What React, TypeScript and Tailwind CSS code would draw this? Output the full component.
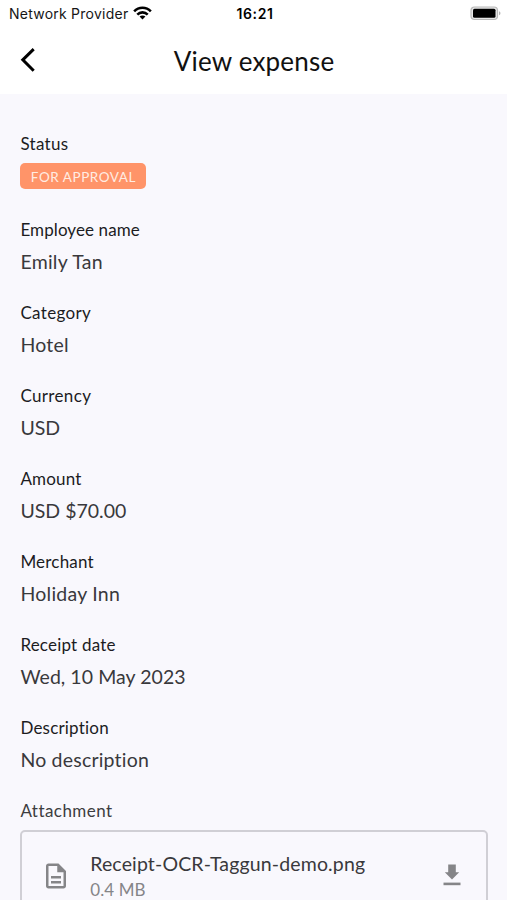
import React from 'react';
import { MdOutlineDescription } from 'react-icons/md';

interface Field {
  label: string;
  value: string;
  labelClass?: string;
  valueClass?: string;
}

const FIELDS: Field[] = [
  { label: 'Employee name', value: 'Emily Tan',        labelClass: 'tracking-[0.1px]' },
  { label: 'Category',      value: 'Hotel',            labelClass: 'tracking-[0.35px]' },
  { label: 'Currency',      value: 'USD',              labelClass: 'tracking-[0.35px]', valueClass: 'tracking-[0px]' },
  { label: 'Amount',        value: 'USD $70.00',       valueClass: 'tracking-[0px]' },
  { label: 'Merchant',      value: 'Holiday Inn' },
  { label: 'Receipt date',  value: 'Wed, 10 May 2023', valueClass: 'tracking-[0.05px]' },
  { label: 'Description',   value: 'No description',   valueClass: 'tracking-[0.2px]' },
];

function StatusBar() {
  return (
    <div className="grid h-7 grid-cols-3 items-center pl-[9px] pr-[6px] font-['Inter',sans-serif] text-[14px] leading-7 text-[#161616]">
      <div className="flex items-center gap-[5px] whitespace-nowrap">
        <span className="tracking-[0.24px]">Network Provider</span>
        <svg width="19" height="14" viewBox="0 0 20 14" className="-mt-[2px] shrink-0">
          <g fill="none" stroke="#000" strokeWidth="2.7">
            <path d="M1.2 5.3C6.1 .3 13.9 .3 18.8 5.3" />
            <path d="M4.5 8.7C7.6 5.6 12.4 5.6 15.5 8.7" />
          </g>
          <path d="M10 13.9L6.9 10.8C8.6 9.2 11.4 9.2 13.1 10.8Z" />
        </svg>
      </div>
      <span className="text-center font-semibold tracking-[0.6px] text-black">16:21</span>
      <svg width="31" height="15" viewBox="0 0 31 15" className="-mt-[2px] justify-self-end">
        <rect x="1" y="1" width="26.5" height="12.5" rx="3.5" fill="#e8e8e8" stroke="#b9b9b9" strokeWidth="1.2" />
        <rect x="3" y="2.8" width="22.5" height="9" rx="1.5" fill="#000" />
        <path d="M29 5.2C31 6 31 8.5 29 9.3Z" fill="#b5b5b5" />
      </svg>
    </div>
  );
}

function Header() {
  return (
    <header className="h-[94px] bg-white">
      <StatusBar />
      <div className="grid h-[66px] grid-cols-[40px_1fr_40px] items-center px-5">
        <button aria-label="Back" className="-mt-[3px]">
          <svg width="16" height="26" viewBox="0 0 16 26" fill="none" stroke="#000" strokeWidth="3">
            <path d="M13.7 2.2L2.8 12.8L13.7 23.8" />
          </svg>
        </button>
        <h1 className="pl-px text-center text-[26px] leading-[66px] tracking-[0.2px] text-[#111]">View expense</h1>
      </div>
    </header>
  );
}

function FieldRow({ label, value, labelClass = 'tracking-[0.2px]', valueClass = 'tracking-[0.25px]' }: Field) {
  return (
    <div className="mb-[27px]">
      <p className={`text-[17px] leading-6 text-[#1c1c1f] ${labelClass}`}>{label}</p>
      <p className={`mt-2 text-[19.5px] leading-6 text-[#39393c] ${valueClass}`}>{value}</p>
    </div>
  );
}

export default function App() {
  return (
    <div className="h-[900px] w-full overflow-hidden bg-[#f9f8fd] font-['Lato',sans-serif] [font-variant-ligatures:none]">
      <Header />
      <main className="pl-[20.4px] pr-[19.5px] pt-[38px]">
        <div className="mb-7">
          <p className="text-[17px] leading-6 tracking-[0.3px] text-[#1c1c1f]">Status</p>
          <span className="mt-[7px] flex h-[26px] w-[126px] items-center justify-center rounded-[5px] bg-[#ff9469] pt-[2px] text-[13.5px] tracking-[0.55px] text-[#ffece2]">
            FOR APPROVAL
          </span>
        </div>

        <div className="pt-px">
          {FIELDS.map(field => (
            <FieldRow key={field.label} {...field} />
          ))}
        </div>

        <p className="text-[17px] leading-6 tracking-[0.45px] text-[#3d3d40]">Attachment</p>
        <div className="mt-[7px] flex h-[100px] items-start rounded-[5px] border-2 border-[#d0cfd5] pl-[18.6px] pr-[24.5px] pt-[20px]">
          <MdOutlineDescription size={30} className="mt-[8.5px] shrink-0 text-[#858588]" />
          <div className="ml-[19.2px] flex-1">
            <p className="text-[19.5px] leading-6 tracking-[0.15px] text-[#39393c]">Receipt-OCR-Taggun-demo.png</p>
            <p className="mt-[2px] text-[17px] leading-6 tracking-[0.1px] text-[#858588]">0.4 MB</p>
          </div>
          <svg width="18" height="22" viewBox="0 0 18 22" className="mt-[12px] shrink-0" fill="#858588">
            <path d="M5.2 .5H12.8V8.3H16.2L9 15.5L1.8 8.3H5.2Z" />
            <rect x=".5" y="18.6" width="17" height="2.6" />
          </svg>
        </div>
      </main>
    </div>
  );
}
